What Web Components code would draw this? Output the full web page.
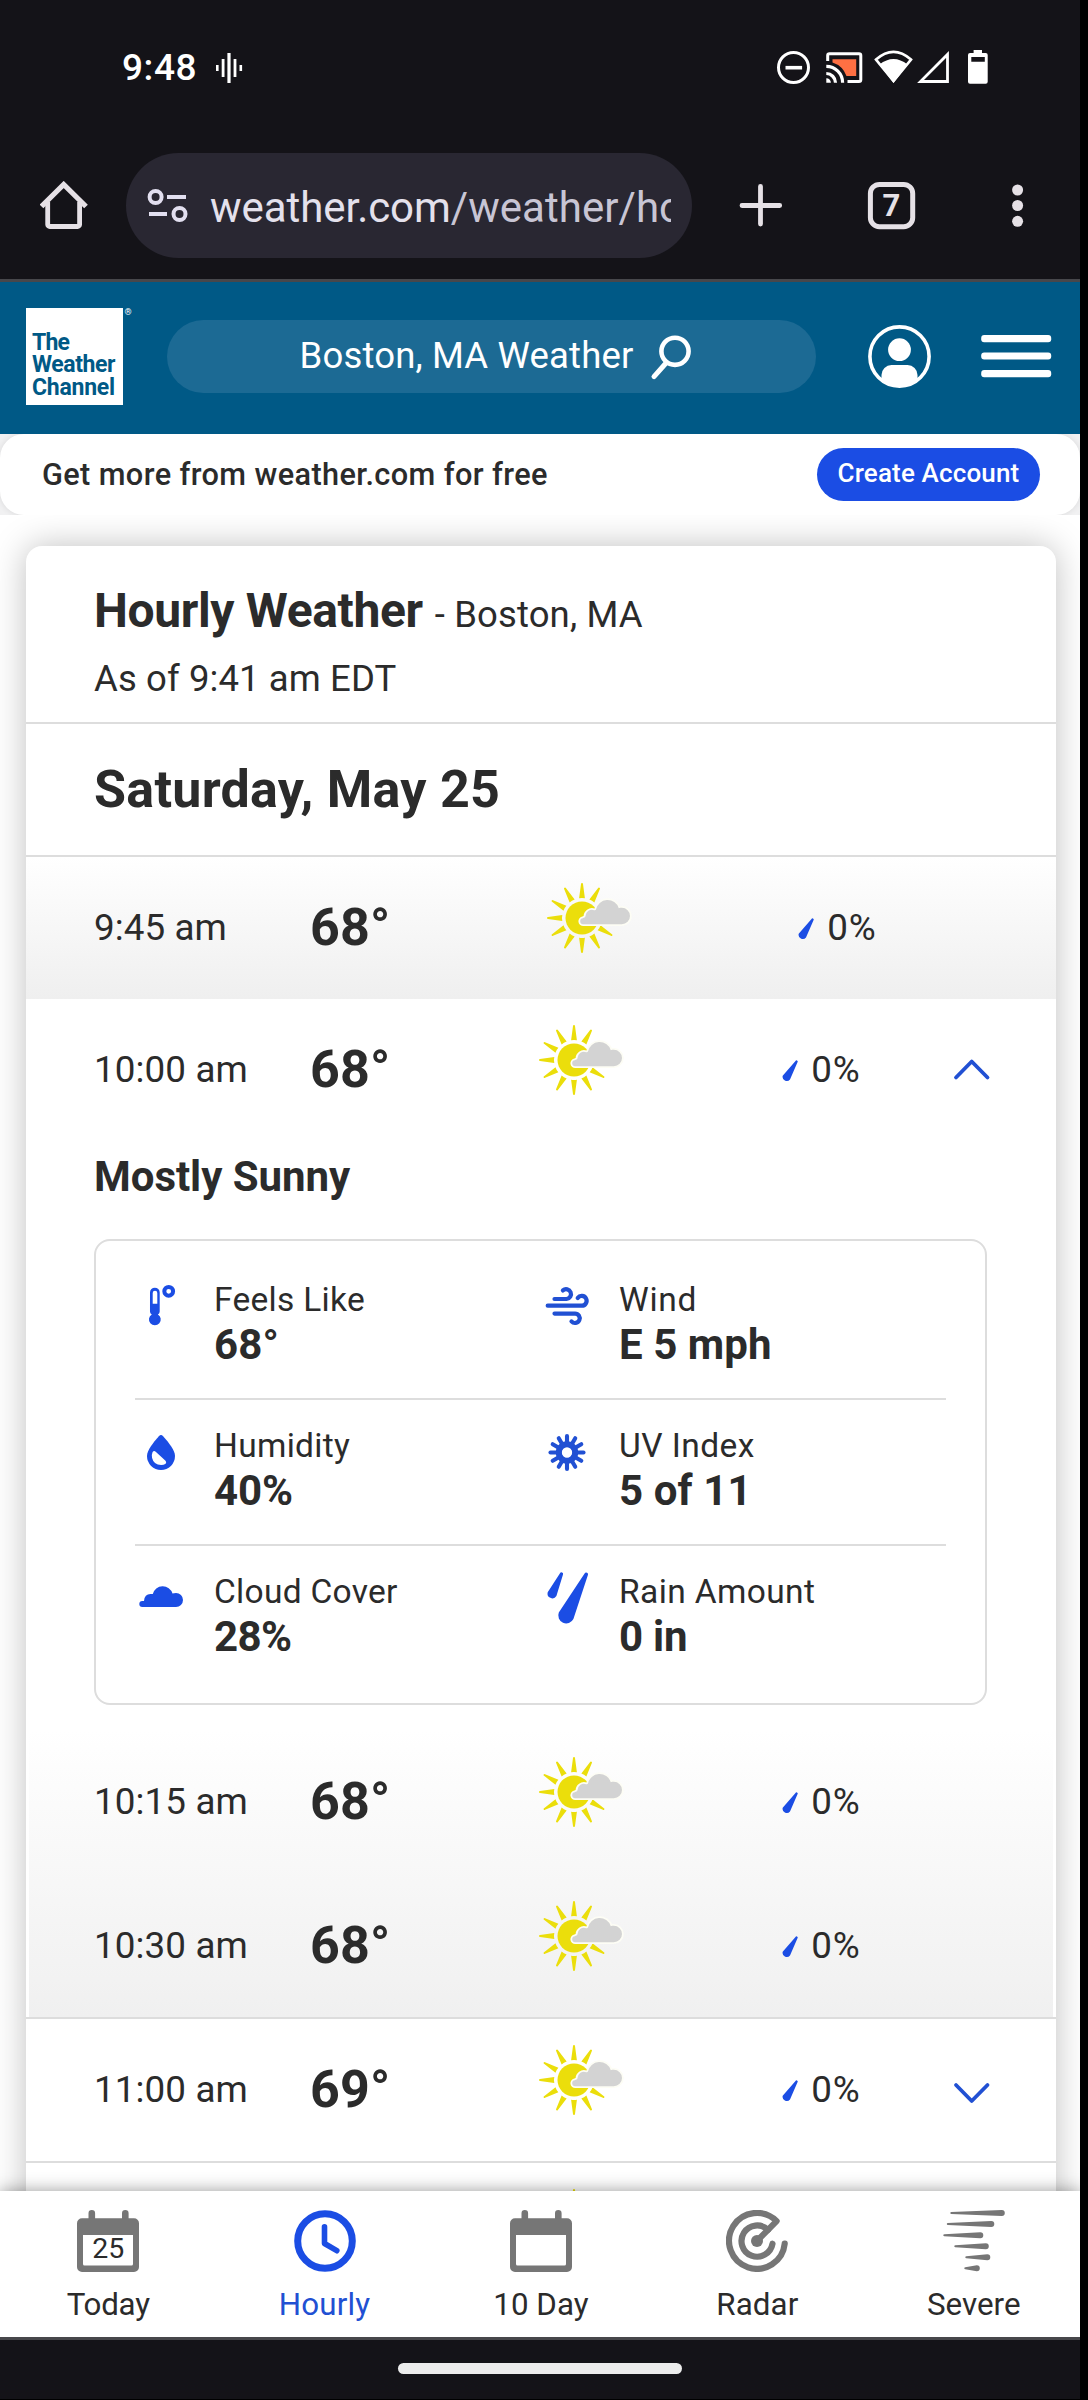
<!DOCTYPE html>
<html lang="en">
<head>
<meta charset="utf-8">
<title>Hourly Weather - Boston, MA</title>
<style>
html,body{margin:0;padding:0;background:#000}
body{font-family:Roboto,"Noto Sans",sans-serif;color:#2b2b2b;width:1088px;height:2400px;overflow:hidden}
</style>
</head>
<body>
<weather-app></weather-app>
<script>
const define=(name,html,setup)=>customElements.define(name,class extends HTMLElement{
  connectedCallback(){
    if(this.shadowRoot)return;
    const root=this.attachShadow({mode:'open'});
    root.innerHTML=typeof html==='function'?html(this):html;
    if(setup)setup(this,root);
  }
});

/* Text whose tracking is tuned so that the drawn glyphs span a given width */
const ctx=document.createElement('canvas').getContext('2d');
define('fit-text',e=>`<style>:host{display:block;white-space:pre;flex:none}</style><slot></slot>`,e=>{
  const size=+e.getAttribute('size'),weight=e.getAttribute('weight')||400,ink=+e.getAttribute('ink');
  e.style.fontSize=size+'px';e.style.fontWeight=weight;
  if(e.hasAttribute('lh'))e.style.lineHeight=e.getAttribute('lh')+'px';
  if(ink){
    ctx.font=`${weight} ${size}px Roboto`;
    const t=e.textContent,m=ctx.measureText(t);
    e.style.letterSpacing=((ink-(m.actualBoundingBoxRight+m.actualBoundingBoxLeft))/(t.length-1)).toFixed(3)+'px';
  }
});

const BLUE='#1b4de4';
const rays=Array.from({length:12},(_,i)=>`<path d="M34.1 17.3L36 3a1 1 0 0 1 2 0L39.9 17.3Q37 16.6 34.1 17.3Z" transform="rotate(${i*30} 37 37)"/>`).join('');
const cloudShape='M38.5 43.200a3 3 0 0 1-.6-6C39 36.600 40.200 36.200 40.400 35.500a6.600 6.600 0 0 1 8.700-6.300c.8.2 1.600.1 1.900-.6a11.800 11.800 0 0 1 22.800-1.400c.8-.3 1.800-.4 3-.4a8.200 8.200 0 0 1 0 16.400z';
const petals=Array.from({length:12},(_,i)=>`<path d="M567 1445V1436" transform="rotate(${i*30} 567 1452.500)"/>`).join('');
const gust=(a,b,y)=>`<path d="M${a} ${y-1}L${b-3} ${y-3}a3 3 0 0 1 0 6L${a} ${y+1}a1 1 0 0 1 0-2Z"/>`;
const calendar=(x)=>`<g fill="#767676"><path d="M${x+11.500} 2222v-8.700a3.300 3.300 0 0 1 6.600 0v8.700zM${x+45} 2222v-8.700a3.300 3.300 0 0 1 6.600 0v8.700z"/><path fill-rule="evenodd" d="M${x+5} 2218.300h52a5 5 0 0 1 5 5v43.700a5 5 0 0 1-5 5h-52a5 5 0 0 1-5-5v-43.700a5 5 0 0 1 5-5zM${x+6} 2235v29a1.500 1.500 0 0 0 1.500 1.500h47a1.500 1.500 0 0 0 1.500-1.500v-29z"/></g>`;
/* name: [viewBox, markup]; drawn at 1:1 */
const ICONS={
voice:['215 52 28 32','<g fill="#fff"><rect x="216" y="65" width="2.600" height="6"/><rect x="221.700" y="59" width="2.800" height="18"/><rect x="227.400" y="53" width="3.200" height="30"/><rect x="233.600" y="59" width="2.800" height="18"/><rect x="239.500" y="65" width="2.600" height="6"/></g>'],
status:['776 48 216 38',`<g fill="none" stroke="#fff" stroke-width="3"><circle cx="793.500" cy="67.500" r="15"/><path d="M785.500 67.700h16.600" stroke-width="3.600"/><path d="M827.700 61v-5.500a1.800 1.800 0 0 1 1.800-1.800h29.500a1.800 1.800 0 0 1 1.800 1.800v24.300a1.800 1.800 0 0 1-1.800 1.800H847.500"/><path d="M826.300 73.500a9.400 9.400 0 0 1 9.200 9.200M826.300 66.300a16.300 16.300 0 0 1 16.300 16.400" stroke-width="3.200"/><path d="M893.500 81L876 59.600Q893.500 44.200 911 59.600Z" stroke-width="2.600"/><path d="M920.500 81.500H947.500V54.500Z" stroke-width="2.800"/></g><path fill="#ff7043" d="M832.500 59.300H856.200V76H846.500A22 22 0 0 0 832.500 62.500Z"/><g fill="#fff"><path d="M826.300 78.200v4.600h4.600a4.600 4.600 0 0 0-4.600-4.600zM893.500 83L879.500 64.500Q893.500 53.500 907.500 64.500Z"/><path fill-rule="evenodd" d="M973.600 50h8.400v3h3.700a2 2 0 0 1 2 2v26.800a2 2 0 0 1-2 2h-15.700a2 2 0 0 1-2-2V55a2 2 0 0 1 2-2h3.600zM971.300 57v4.800h13.500V57z"/></g>`],
home:['40 181 48 49','<g fill="none" stroke="#e6e1e6" stroke-width="4.800" stroke-linejoin="round"><path d="M41.500 206.500L63.700 184.500L86 206.500" stroke-width="5.200" stroke-linejoin="miter"/><path d="M47.700 202V224.500a2 2 0 0 0 2 2H77.600a2 2 0 0 0 2-2V202"/></g>'],
tune:['147 188 41 35','<g fill="none" stroke="#e2dff0" stroke-width="4"><circle cx="155.600" cy="197" r="6"/><path d="M167 197h19M149 214h18"/><circle cx="179.500" cy="214" r="6"/></g>'],
plus:['739 184 44 44','<path d="M760.500 186.500v37.500M742 205.500h37.700" stroke="#e6e1e6" stroke-width="4.800" stroke-linecap="round"/>'],
tabs:['867 181 49 49','<rect x="870.400" y="184.400" width="42.300" height="42.300" rx="9" fill="none" stroke="#e6e1e6" stroke-width="5"/><text x="891.300" y="216.200" text-anchor="middle" font-size="31" font-weight="700" fill="#e6e1e6">7</text>'],
dots:['1011 183 13 45','<g fill="#e6e1e6"><circle cx="1017.600" cy="190" r="5.500"/><circle cx="1017.600" cy="205.500" r="5.500"/><circle cx="1017.600" cy="221.300" r="5.500"/></g>'],
search:['650 332 44 48','<g fill="none" stroke="#fff" stroke-linecap="round"><circle cx="675" cy="350.300" r="13.600" stroke-width="4.600"/><path d="M666.500 361.500L654 375.700" stroke-width="5"/></g>'],
user:['867 324 65 65','<circle cx="899.500" cy="356.500" r="29.600" fill="none" stroke="#fff" stroke-width="3.600"/><circle cx="899.500" cy="349.700" r="11.400" fill="#fff"/><path fill="#fff" d="M881.500 380.500V375a10 10 0 0 1 10-10H907.500a10 10 0 0 1 10 10V380.500A31 31 0 0 1 881.500 380.500Z"/>'],
menu:['981 333 71 47','<g fill="#fff"><rect x="981.200" y="335" width="70" height="7.200" rx="3"/><rect x="981.200" y="352.400" width="70" height="7.200" rx="3"/><rect x="981.200" y="370" width="70" height="7.200" rx="3"/></g>'],
sun:['0 0 88 76',`<g fill="#ebde0b">${rays}<circle cx="37" cy="37" r="16.500"/></g><path d="${cloudShape}" fill="#fdfdf5" stroke="#fdfdf5" stroke-width="3.600"/><path d="${cloudShape}" fill="#d3d3d3"/>`],
drop:['0 0 16 22',`<path fill="${BLUE}" d="M13.500 .9A1.200 1.200 0 0 1 15.700 1.800L8 19.500A4.200 4.200 0 0 1 .7 15.800Z"/>`],
up:['953 0 38 24',`<path d="M956 19.500L971.700 3.500L987.500 19.500" fill="none" stroke="#2150d3" stroke-width="3.800" stroke-linecap="round" stroke-linejoin="round"/>`],
down:['953 0 38 24',`<path d="M956 4L971.700 20L987.500 4" fill="none" stroke="#2150d3" stroke-width="3.800" stroke-linecap="round" stroke-linejoin="round"/>`],
feels:['135 1275 52 60',`<path fill="${BLUE}" fill-rule="evenodd" d="M150 1292.500a4.850 4.850 0 0 1 9.700 0V1311.500a3 3 0 0 1-1.800 2.900a5.900 5.900 0 1 1-6.100 0a3 3 0 0 1-1.800-2.900zM152.700 1293V1303.800h4.600V1293a2.300 2.300 0 0 0-4.600 0z"/><circle cx="168.700" cy="1291.300" r="4.400" fill="none" stroke="${BLUE}" stroke-width="4"/>`],
wind:['540 1275 52 60','<g fill="none" stroke="#2150d3" stroke-width="4.200" stroke-linecap="round"><path d="M554.500 1299H566.500a4.900 4.900 0 1 0-3.600-8.600"/><path d="M547.700 1305.700H581.500a4.900 4.900 0 1 0-3.800-7.700"/><path d="M554.500 1313.600H575a4.700 4.700 0 1 1-3.500 7.800"/></g>'],
humidity:['135 1421 52 60',`<path fill="${BLUE}" d="M158.900 1436.200Q161 1434 163.100 1436.200C169 1443 175 1450 175 1456a14 14 0 0 1-28 0C147 1450 153 1443 158.900 1436.200Z"/><path fill="#fff" d="M155.700 1451.700L165.500 1460.700Q167.500 1463.500 163.500 1464.800Q154 1466 152.100 1458Q151.500 1454 152.600 1451.900Q154 1450 155.700 1451.700Z"/>`],
uv:['540 1421 52 60',`<circle cx="567" cy="1452.500" r="8.200" fill="none" stroke="#2150d3" stroke-width="6"/><g stroke="#2150d3" stroke-width="4.100" stroke-linecap="round">${petals}</g>`],
cloud:['135 1567 52 60',`<path fill="${BLUE}" d="M142.300 1607a3 3 0 0 1 0-6H144Q144.500 1594 150.500 1594L152.800 1594A10.200 10.200 0 0 1 172.500 1593.500Q174 1593 176 1593A7 7 0 0 1 176 1607Z"/>`],
rain:['540 1567 52 60',`<path fill="${BLUE}" d="M584.600 1573.500A1.800 1.800 0 0 1 587.900 1575.100L573.400 1619A8 8 0 0 1 558.800 1612.500ZM560 1573.300A1.500 1.500 0 0 1 563 1574.500L556.400 1596A4.800 4.800 0 0 1 547.700 1592.200Z"/>`],
today:['77 2210 62 62',calendar(77)+'<text x="108.300" y="2258.300" text-anchor="middle" font-size="28.500" fill="#2b2b2b">25</text>'],
hourly:['293.500 2210 62 62',`<g fill="none" stroke="${BLUE}"><circle cx="324.500" cy="2241" r="27.300" stroke-width="7"/><path d="M324 2226.700V2243.500L336.300 2250.700" stroke-width="5.600" stroke-linecap="round" stroke-linejoin="round"/></g>`],
tenday:['510 2210 62 62',calendar(510)],
radar:['726.700 2210 62 62','<g fill="none" stroke="#767676" stroke-width="6.200" stroke-linejoin="round" stroke-linecap="round"><path d="M785.400 2243.700A27.900 27.900 0 1 1 777.300 2221.100L757.700 2241"/><path d="M773.200 2243.700A15.600 15.600 0 1 1 768.700 2229.900"/></g><circle cx="757.700" cy="2241" r="6" fill="#767676"/>'],
severe:['942.700 2210 62 62',`<g fill="#767676">${gust(951,1004.500,2213)}${gust(947.500,994,2224)}${gust(944,983,2235.200)}${gust(955,988.500,2246.200)}${gust(966,990,2257.300)}${gust(965,979.500,2268.300)}</g>`]
};
define('glyph-icon',e=>{
  const [vb,body]=ICONS[e.getAttribute('name')],[, ,w,h]=vb.split(' ');
  return `<style>:host{display:block;flex:none;width:${w}px;height:${h}px}svg{display:block}text{font-family:Roboto,sans-serif}</style><svg width="${w}" height="${h}" viewBox="${vb}" aria-hidden="true">${body}</svg>`;
});

define('status-bar',`<style>
:host{display:flex;height:132px;align-items:flex-start;box-sizing:border-box;color:#fff}
fit-text{margin:46px 0 0 122px;width:93px}
.voice{margin-top:52px}.sys{margin:48px 0 0 533px}
</style><fit-text size="37" weight="500" ink="72.500" lh="44">9:48</fit-text><glyph-icon class="voice" name="voice"></glyph-icon><glyph-icon class="sys" name="status"></glyph-icon>`);

define('browser-bar',`<style>
:host{display:flex;align-items:center;height:147px;padding-left:40px;border-bottom:3px solid #47474b}
.url{display:flex;align-items:center;box-sizing:border-box;width:566px;height:105px;border-radius:53px;background:#292732;padding-left:21px;margin:0 47px 0 38px}
.text{display:flex;width:461px;overflow:hidden;margin:4px 0 0 22px;color:#e4e1ec}
.path{color:#c8c5d4}
.tabs{margin:0 95px 0 84px}
</style><glyph-icon name="home"></glyph-icon><div class="url"><glyph-icon name="tune"></glyph-icon><div class="text"><fit-text size="42" lh="50" ink="238">weather.com</fit-text><fit-text class="path" size="42" lh="50" ink="300">/weather/hourly</fit-text></div></div><glyph-icon name="plus"></glyph-icon><glyph-icon class="tabs" name="tabs"></glyph-icon><glyph-icon name="dots"></glyph-icon>`);

define('site-header',`<style>
:host{display:flex;align-items:center;box-sizing:border-box;height:152px;padding:0 0 3px 26px;background:#005986;color:#fff}
.logo{box-sizing:border-box;width:97px;height:97px;background:#fff;color:#005986;padding:23.500px 0 0 6px}
.reg{width:44px;align-self:flex-start;margin-top:24px;font-size:9px;line-height:12px;text-indent:1.500px}
.search{display:flex;align-items:center;box-sizing:border-box;width:649px;height:73px;border-radius:37px;background:#1c6a94;padding-left:132.500px}
.search fit-text{width:350.500px;margin-top:-1px}
.user{margin:0 49px 0 51px}
</style><div class="logo"><fit-text size="23" weight="700" ink="37.500" lh="22.700">The</fit-text><fit-text size="23" weight="700" ink="84" lh="22.700">Weather</fit-text><fit-text size="23" weight="700" ink="82" lh="22.700">Channel</fit-text></div><span class="reg">®</span>
<div class="search"><fit-text size="36.500" ink="330.500" lh="44">Boston, MA Weather</fit-text><glyph-icon name="search"></glyph-icon></div><glyph-icon class="user" name="user"></glyph-icon><glyph-icon name="menu"></glyph-icon>`);

define('promo-banner',`<style>
:host{display:block;background:#f1f1f2;height:81px;overflow:hidden}
.bar{display:flex;align-items:center;justify-content:space-between;box-sizing:border-box;height:81px;padding:0 40px 0 42px;border-radius:24px;background:#fff;box-shadow:0 0 6px rgba(0,0,0,.1)}
.btn{display:flex;justify-content:center;width:223px;height:53px;border-radius:27px;background:${BLUE};color:#fff}
.btn fit-text{margin-top:-1.500px}
</style><div class="bar"><fit-text size="30.700" weight="500" ink="504" lh="36">Get more from weather.com for free</fit-text><div class="btn"><fit-text size="26" weight="500" ink="180" lh="53">Create Account</fit-text></div></div>`);

define('hour-row',e=>{
  const a=n=>e.getAttribute(n),wide=e.hasAttribute('wide'),s=wide?8:0;
  return `<style>
:host{display:flex;align-items:flex-start;box-sizing:border-box;height:144px;padding-left:68px;border-top:2px solid transparent}
:host([line]){border-top-color:#ddd}
.time{margin-top:49px;width:216px}.temp{margin-top:41px;width:${226.700+s}px}
.sun{margin-top:24.400px}.drop{margin:61.300px 0 0 ${157.300+s}px}.pct{margin:49px 0 0 13.200px;width:${141.800-2*s}px}
.chev{margin-top:62.500px}.up{margin-top:59px}
</style><fit-text class="time" size="36.800" lh="44" ink="${a('ink')}">${a('time')}</fit-text><fit-text class="temp" size="52" weight="700" lh="60" ink="75">${a('temp')}</fit-text><glyph-icon class="sun" name="sun"></glyph-icon><glyph-icon class="drop" name="drop"></glyph-icon><fit-text class="pct" size="36.800" lh="44" ink="45.500">0%</fit-text>${a('chevron')?`<glyph-icon class="chev ${a('chevron')}" name="${a('chevron')}"></glyph-icon>`:''}`;
});

define('detail-item',e=>`<style>
:host{display:flex;width:405px;flex:none}
.txt{margin-left:27px;padding-top:4.700px}
</style><glyph-icon name="${e.getAttribute('icon')}"></glyph-icon><div class="txt"><fit-text size="33.500" lh="40" ink="${e.getAttribute('li')}">${e.getAttribute('label')}</fit-text><fit-text size="42" weight="700" lh="49" ink="${e.getAttribute('vi')}">${e.getAttribute('value')}</fit-text></div>`);

define('detail-grid',`<style>
:host{display:block;box-sizing:border-box;width:893px;height:466px;border:2px solid #ddd;border-radius:16px;margin:37.300px 0 24px 68px;padding:11px 39px 0}
.r{display:flex;box-sizing:border-box;height:146px;padding-top:23px}
.r+.r{border-top:2px solid #ddd;padding-top:21px}
</style><div class="r"><detail-item icon="feels" label="Feels Like" li="148" value="68°" vi="60.500"></detail-item><detail-item icon="wind" label="Wind" li="74.500" value="E 5 mph" vi="149"></detail-item></div>
<div class="r"><detail-item icon="humidity" label="Humidity" li="134" value="40%" vi="77"></detail-item><detail-item icon="uv" label="UV Index" li="132.700" value="5 of 11" vi="123.500"></detail-item></div>
<div class="r"><detail-item icon="cloud" label="Cloud Cover" li="182" value="28%" vi="76"></detail-item><detail-item icon="rain" label="Rain Amount" li="193" value="0 in" vi="66"></detail-item></div>`);

define('hourly-card',`<style>
:host{display:block;box-sizing:border-box;width:1030px;height:1720px;margin:31px 0 0 26px;border-radius:16px 16px 0 0;background:#fff;box-shadow:0 0 34px rgba(0,0,0,.25)}
.head{box-sizing:border-box;height:178px;border-bottom:2px solid #ddd;padding:36.600px 0 0 68px}
.title{display:flex;align-items:baseline;gap:12px;height:56px}
.asof{margin-top:18px}
.day{box-sizing:border-box;height:131px;padding:35.500px 0 0 68px}
.first{background:linear-gradient(#fff,#efefef)}
.open{margin-top:-2px}
.phrase{margin:10.600px 0 0 68px}
.group{background:linear-gradient(#fff,#f0f0f0) 3px 0/1024px 100% no-repeat}
.next{display:flex;border-top:2px solid #ddd;padding:24.400px 0 0 510.700px}
</style>
<div class="head"><div class="title"><fit-text size="48" weight="700" ink="326.500" lh="56">Hourly Weather</fit-text><fit-text size="36.500" ink="208" lh="40">- Boston, MA</fit-text></div><fit-text class="asof" size="36.500" ink="301.500" lh="44">As of 9:41 am EDT</fit-text></div>
<div class="day"><fit-text size="52" weight="700" ink="403" lh="60">Saturday, May 25</fit-text></div>
<hour-row class="first" line wide time="9:45 am" ink="129.500" temp="68°"></hour-row>
<hour-row class="open" time="10:00 am" ink="148.500" temp="68°" chevron="up"></hour-row>
<fit-text class="phrase" size="42" weight="700" ink="255" lh="50">Mostly Sunny</fit-text>
<detail-grid></detail-grid>
<div class="group"><hour-row time="10:15 am" ink="148.500" temp="68°"></hour-row><hour-row time="10:30 am" ink="148.500" temp="68°"></hour-row></div>
<hour-row line time="11:00 am" ink="148.500" temp="69°" chevron="down"></hour-row>
<div class="next"><glyph-icon name="sun"></glyph-icon></div>`);

define('tab-item',e=>`<style>
:host{display:flex;flex-direction:column;align-items:center;flex:none;width:216.400px;padding-top:19px}
:host([active]){color:#2150d3}
fit-text{margin-top:15px}
</style><glyph-icon name="${e.getAttribute('icon')}"></glyph-icon><fit-text size="31.300" lh="36" ink="${e.getAttribute('ink')}">${e.getAttribute('label')}</fit-text>`);
define('tab-bar',`<style>
:host{display:flex;flex:none;position:relative;height:146px;background:#fff;box-shadow:0 0 16px rgba(0,0,0,.4);clip-path:inset(-30px 0 0 0)}
</style><tab-item icon="today" label="Today" ink="83.500"></tab-item><tab-item active icon="hourly" label="Hourly" ink="89.500"></tab-item><tab-item icon="tenday" label="10 Day" ink="93.500"></tab-item><tab-item icon="radar" label="Radar" ink="80.500"></tab-item><tab-item icon="severe" label="Severe" ink="92"></tab-item>`);

define('weather-app',`<style>
:host{display:flex;flex-direction:column;width:1080px;height:2400px;background:#141318;overflow:hidden}
main{flex:1;min-height:0;overflow:hidden;background:#fff;display:flow-root}
.system{display:flex;flex:none;box-sizing:border-box;height:63px;border-top:3px solid #47474b;border-bottom:1px solid #000;justify-content:center;padding-top:23px}
.handle{width:284px;height:11px;border-radius:6px;background:#ececec}
</style><status-bar></status-bar><browser-bar></browser-bar><site-header></site-header><promo-banner></promo-banner><main><hourly-card></hourly-card></main><tab-bar></tab-bar><div class="system"><div class="handle"></div></div>`);
</script>
</body>
</html>
